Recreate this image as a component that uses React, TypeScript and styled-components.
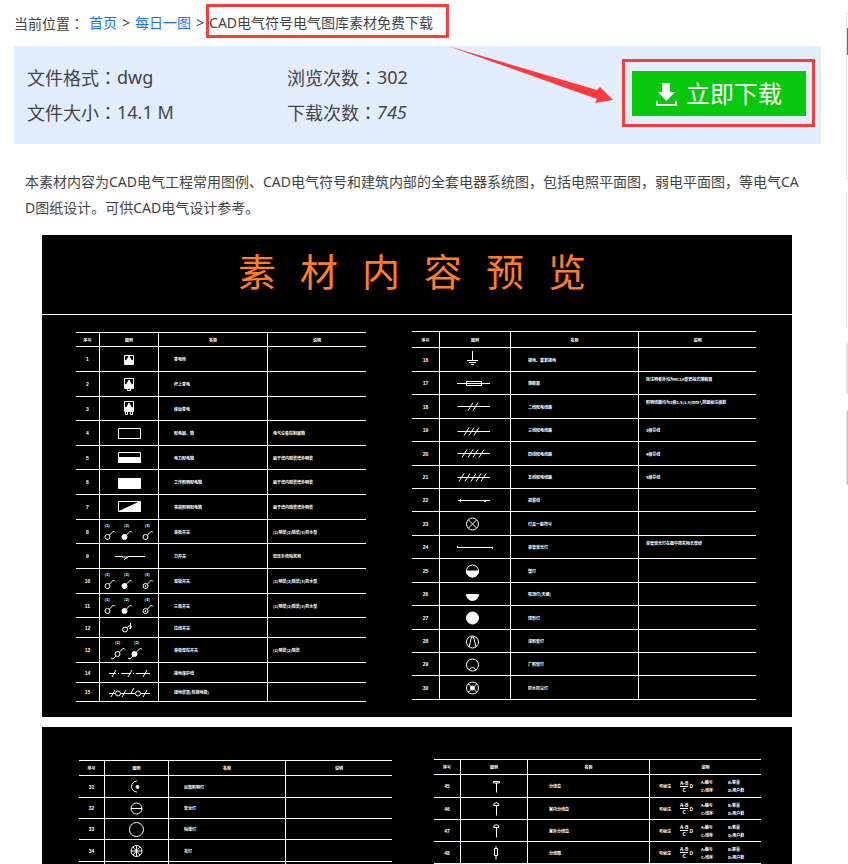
import React from "react";
import styled, { createGlobalStyle } from "styled-components";

const GlobalStyle = createGlobalStyle`
  * { box-sizing: border-box; }
  html, body { margin: 0; background: #fff; }
  body {
    font-family: "Noto Sans", "Noto Sans CJK SC", sans-serif;
    font-size: 14px;
    color: #444;
  }
`;

const RED = "#fd3b3b";

const Page = styled.div`
  display: flex;
  height: 100vh;
  overflow: hidden;
`;

const Main = styled.main`
  flex: 1;
  min-width: 0;
  margin: 0 25px 0 14px;
`;

const Crumbs = styled.nav`
  display: flex;
  align-items: center;
  gap: 5px;
  height: 46px;
  line-height: 20px;
`;

const Crumb = styled.a`
  color: #1e6fff;
  text-decoration: none;
`;

const Current = styled.span`
  position: relative;
`;

const Colon = styled.span`
  font-family: "Noto Sans CJK TC", sans-serif;
`;

const Frame = styled.i<{ $inset: string }>`
  position: absolute;
  inset: ${(p) => p.$inset};
  border: 3px solid ${RED};
  pointer-events: none;
`;

const InfoPanel = styled.section`
  position: relative;
  display: flex;
  align-items: center;
  padding: 14px 15px 14px 13px;
  background: #e2edff;
`;

const Facts = styled.dl`
  display: grid;
  grid-template-columns: 260px 1fr;
  grid-auto-rows: 35px;
  flex: 1;
  margin: 0;
  font-size: 18px;
  line-height: 34px;
`;

const Fact = styled.div`
  display: flex;
  dt, dd { margin: 0; }
`;

const Download = styled.button`
  position: relative;
  display: flex;
  align-items: center;
  justify-content: center;
  gap: 9px;
  width: 174px;
  height: 45px;
  margin-bottom: 3px;
  padding: 0;
  border: 0;
  background: #07c80a;
  color: #fff;
  font: inherit;
  font-size: 24px;
  line-height: 32px;
`;

const Arrow = styled.svg`
  position: absolute;
  top: 0;
  right: 207px;
`;

const Summary = styled.p`
  margin: 25px 15px 14px 11px;
  line-height: 26px;
  word-break: break-all;
`;

const Sheet = styled.section<{ $height: number }>`
  min-height: ${(p) => p.$height}px;
  margin: 0 29px 10px 28px;
  background: #000;
  color: #fff;
`;

const SheetTitle = styled.h2`
  display: flex;
  justify-content: center;
  gap: 24px;
  height: 80px;
  margin: 0;
  padding: 0 10px 6px 0;
  border-bottom: 1px solid #fff;
  color: #ff7f27;
  font-size: 38px;
  font-weight: 400;
  line-height: 72px;
`;

const Tables = styled.div<{ $pad: string; $gap: number }>`
  display: flex;
  align-items: flex-start;
  gap: ${(p) => p.$gap}px;
  padding: ${(p) => p.$pad};
`;

const Legend = styled.table<{ $grow: number; $top: number }>`
  flex: ${(p) => p.$grow} 1 0;
  width: 0;
  margin-top: ${(p) => p.$top}px;
  table-layout: fixed;
  border-spacing: 0;
  font-family: "Noto Sans CJK SC", sans-serif;
  font-size: 4px;
  font-weight: 700;
  line-height: 6px;
`;

const Col = styled.col<{ $w?: number }>`
  width: ${(p) => (p.$w ? `${p.$w}px` : "auto")};
`;

const Row = styled.tr<{ $h: number }>`
  height: ${(p) => p.$h}px;
`;

const Head = styled.th`
  padding: 0;
  border-top: 1px solid #fff;
  border-bottom: 1px solid #fff;
  text-align: center;
  & + & { border-left: 1px solid #fff; }
`;

const Cell = styled.td<{ $indent?: number; $top?: boolean }>`
  padding: ${(p) => (p.$top ? 4 : 0)}px 0 0 ${(p) => p.$indent || 0}px;
  border-bottom: 1px solid #fff;
  text-align: ${(p) => (p.$indent ? "left" : "center")};
  vertical-align: ${(p) => (p.$top ? "top" : "middle")};
  white-space: nowrap;
  & + & { border-left: 1px solid #fff; }
`;

const NumCell = styled(Cell)`
  font-family: "Liberation Sans", sans-serif;
  font-size: 5px;
`;

const Drawing = styled.svg`
  display: block;
  fill: none;
  stroke: #fff;
  text { fill: #fff; stroke: none; font-size: 4px; }
`;

const Marking = styled.div`
  display: grid;
  grid-template-columns: 21px 21px 27px 1fr;
  align-items: center;
  line-height: 8px;
`;

const Fraction = styled.span`
  display: flex;
  align-items: center;
  gap: 1px;
  font-size: 5px;
`;

const Ratio = styled.span`
  display: grid;
  line-height: 6px;
  text-align: center;
  span:first-child { border-bottom: 1px solid #fff; }
`;

const Lines = styled.span`
  display: grid;
`;

const Aside = styled.aside`
  flex: none;
  width: 2px;
  padding-top: 13px;
`;

const SideCard = styled.div<{ $h: number; $gap: number; $bg: string }>`
  height: ${(p) => p.$h}px;
  margin-bottom: ${(p) => p.$gap}px;
  padding-top: 14px;
  border: 1px solid #e3e5e8;
  border-right: 0;
  background: ${(p) => p.$bg};
`;

const SideTab = styled.div`
  height: 27px;
  background: #2a6fe8;
`;

type Entry = { no: string; h: number; art: React.ReactNode; name: string; note?: React.ReactNode; top?: boolean };

const Switch = ({ x, y = 17, solid, dot }: { x: number; y?: number; solid?: boolean; dot?: boolean }) => (
  <g>
    <circle cx={x} cy={y} r="2.5" fill={solid ? "#fff" : "none"} />
    <path d={`M${x + 2} ${y - 2}l4 -4l1.5 1.5`} />
    {dot && <circle cx={x} cy={y} r=".5" />}
  </g>
);

const Switches = ({ dot }: { dot?: boolean }) => (
  <g>
    <text x="4.5" y="6.5">(1)</text>
    <text x="24" y="6.5">(2)</text>
    <text x="44.5" y="6.5">(3)</text>
    <Switch x={7.5} />
    <Switch x={24.5} solid />
    <Switch x={45.5} dot={dot} />
  </g>
);

const Wire = ({ y, xs }: { y: number; xs: number[] }) => (
  <g>
    <path d={`M17.5 ${y}.5H50`} />
    {xs.map((x) => <path key={x} d={`M${x} ${y + 4}.5l5 -8`} />)}
  </g>
);

const Lamp = ({ y, children }: { y: number; children?: React.ReactNode }) => (
  <g transform={`translate(32.5 ${y})`}>
    <circle r="6" />
    {children}
  </g>
);

const fixNote = "画于墙内暗装墙外明装";
const modes = "(1)明装(2)暗装(3)防水型";

const listA: Entry[] = [
  { no: "1", h: 25, name: "变电所", art: <g><path d="M24.5 8.5h9v9h-9z" /><path d="M25 17v-3l2-1 2-4 2 4 2 1v3z" fill="#fff" /></g> },
  { no: "2", h: 25, name: "杆上变电", art: <g><path d="M24.5 6.5h9v10h-9z" /><path d="M25 16v-3l2-1 2-4 2 4 2 1v3z" fill="#fff" /><path d="M27.5 17v1.5h3V17" /></g> },
  { no: "3", h: 24, name: "移动变电", art: <g><path d="M24.5 4.5h9v10h-9z" /><path d="M25 14v-3l2-1 2-4 2 4 2 1v3z" fill="#fff" /><path d="M25.5 15v2.5h2V15M30.5 15v2.5h2V15" /></g> },
  { no: "4", h: 25, name: "配电屏、箱", note: "电气设备控制屏箱", art: <path d="M18.5 7.5h22v10h-22z" /> },
  { no: "5", h: 24, name: "电力配电箱", note: fixNote, art: <g><path d="M18.5 6.5h22v10h-22z" /><path d="M18.5 11.5h22v5h-22z" fill="#fff" /></g> },
  { no: "6", h: 25, name: "工作照明配电箱", note: fixNote, art: <path d="M18.5 8.5h22v10h-22z" fill="#fff" /> },
  { no: "7", h: 25, name: "事故照明配电箱", note: fixNote, art: <g><path d="M18.5 6.5h22v10h-22z" /><path d="M19 16.5l21.500-10v10z" fill="#fff" /></g> },
  { no: "8", h: 24, name: "单极开关", note: modes, art: <Switches /> },
  { no: "9", h: 25, name: "刀开关", note: "低压系统隔离用", art: <path d="M15 12.5h8M24 15.5l4-2.500h-6M28 12.5h17" /> },
  { no: "10", h: 25, name: "双极开关", note: modes, art: <Switches dot /> },
  { no: "11", h: 24, name: "三极开关", note: modes, art: <Switches dot /> },
  { no: "12", h: 20, name: "拉线开关", art: <g><circle cx="25" cy="11.5" r="2.500" /><path d="M27 9.500l4-3M30.500 5v6M29 10.500l3-2" /></g> },
  { no: "13", h: 25, name: "单极双控开关", note: "(1)明装(2)暗装", art: <g><text x="15" y="6">(1)</text><text x="34" y="6">(2)</text><Switch x={17.5} y={16} /><Switch x={34.5} y={16} solid /><path d="M16 18l-3 3-2-1M33 18l-3 3-2-1" /></g> },
  { no: "14", h: 20, name: "接地保护线", art: <path d="M9 10.5h7M18 10.500h1M21 10.500h10M33 10.500h1M36 10.500h14M12 14l4-7M28 14l4-7M43 14l4-7" /> },
  { no: "15", h: 19, name: "接地装置(有接地极)", art: <g><path d="M9 10.5h6M21 10.500h14M41 10.500h9M11 14l4-7M22 14l4-7M31 10l3-5M43 14l4-7" /><circle cx="18" cy="10.500" r="2.500" /><circle cx="38" cy="10.500" r="2.500" /></g> },
];

const listB: Entry[] = [
  { no: "16", h: 24, name: "接地、重复接地", art: <path d="M32.5 3v9M27 12.5h11M29 14.500h7M31 16.500h3" /> },
  { no: "17", h: 23, name: "熔断器", top: true, note: "除注明者外均为RC1A型瓷插式熔断器", art: <path d="M17 11.5h33M26.500 9.500h15v4h-15z" /> },
  { no: "18", h: 24, name: "二线配电线路", top: true, note: "照明线路均为2根2.5(1.5)mm²,按图标注根数", art: <Wire y={11} xs={[28, 33]} /> },
  { no: "19", h: 23, name: "三线配电线路", note: "3根导线", art: <Wire y={12} xs={[24, 29, 34]} /> },
  { no: "20", h: 24, name: "四线配电线路", note: "4根导线", art: <Wire y={11} xs={[22, 28, 33, 39]} /> },
  { no: "21", h: 23, name: "五线配电线路", note: "5根导线", art: <Wire y={11} xs={[19, 25, 31, 36, 41]} /> },
  { no: "22", h: 23, name: "避雷线", art: <path d="M18 11.500h32M20.500 10v3M44 12.500h2" /> },
  { no: "23", h: 24, name: "灯具一般符号", art: <Lamp y={12}><path d="M-4-4l8 8M4-4l-8 8" /></Lamp> },
  { no: "24", h: 23, name: "单管荧光灯", top: true, note: "单管荧光灯在图中按实际长度绘", art: <path d="M17.500 10v1.500h35v1.500" /> },
  { no: "25", h: 24, name: "壁灯", art: <Lamp y={12}><path d="M-6 0a6 6 0 0 0 12 0z" fill="#fff" /></Lamp> },
  { no: "26", h: 23, name: "吸顶灯(天棚)", art: <path d="M26.500 11.500a6 6 0 0 0 12 0z" fill="#fff" /> },
  { no: "27", h: 24, name: "球形灯", art: <circle cx="32.500" cy="12" r="6" fill="#fff" /> },
  { no: "28", h: 23, name: "深照型灯", art: <Lamp y={12}><path d="M-3.500 5l2.500-10h2l2.500 10" /></Lamp> },
  { no: "29", h: 23, name: "广照型灯", art: <Lamp y={12}><path d="M-3.500 5q3.500-5 7 0" /></Lamp> },
  { no: "30", h: 24, name: "防水防尘灯", art: <Lamp y={12}><path d="M-4-4l8 8M4-4l-8 8" /><circle r="2" fill="#fff" /></Lamp> },
];

const listC: Entry[] = [
  { no: "31", h: 22, name: "局部照明灯", art: <g><path d="M32 5a5.500 5.500 0 0 0 0 11" /><circle cx="32.500" cy="11" r="1.500" fill="#fff" /></g> },
  { no: "32", h: 21, name: "安全灯", art: <g><circle cx="31.500" cy="10.500" r="5.500" /><path d="M26 10.500h11" /></g> },
  { no: "33", h: 21, name: "隔爆灯", art: <circle cx="31.500" cy="10.500" r="7" /> },
  { no: "34", h: 22, name: "花灯", art: <g><circle cx="31.500" cy="11" r="5.500" /><path d="M31.500 5.500v11M26 11h11M28 7l7 8M35 7l-7 8" /></g> },
  { no: "", h: 22, name: "", art: null },
];

const marking = (
  <Marking>
    <span>可标注</span>
    <Fraction><Ratio><span>A-B</span><span>C</span></Ratio>D</Fraction>
    <Lines><span>A:编号</span><span>C:线序</span></Lines>
    <Lines><span>B:容量</span><span>D:用户数</span></Lines>
  </Marking>
);

const cap = "M32.500 7.500a2.500 2.500 0 0 1 5.500 0zM35.500 7.500v10";

const listD: Entry[] = [
  { no: "45", h: 23, name: "分线盒", note: marking, art: <path d="M32.500 6.500h6v1.500h-6zM35.500 7.500v10" /> },
  { no: "46", h: 22, name: "室内分线盒", note: marking, art: <path d={cap} /> },
  { no: "47", h: 22, name: "室外分线盒", note: marking, art: <path d={cap} /> },
  { no: "48", h: 22, name: "分线箱", note: marking, art: <path d="M33.500 6.500h3v7h-3zM35 4v2M35 13.500v4" /> },
  { no: "", h: 22, name: "", art: null },
];

type LegendProps = { list: Entry[]; cols: number[]; head: number; grow: number; top?: number; indent: number; noteIndent: number };

function LegendTable({ list, cols, head, grow, top = 0, indent, noteIndent }: LegendProps) {
  return (
    <Legend $grow={grow} $top={top}>
      <colgroup>
        {cols.map((w, i) => <Col key={i} $w={w} />)}
        <Col />
      </colgroup>
      <thead>
        <Row $h={head}>
          <Head>序号</Head><Head>图例</Head><Head>名称</Head><Head>说明</Head>
        </Row>
      </thead>
      <tbody>
        {list.map((e, i) => (
          <Row key={i} $h={e.h}>
            <NumCell>{e.no}</NumCell>
            <Cell>
              <Drawing width={cols[1] - 1} height={e.h - 1} viewBox={`0 0 ${cols[1] - 1} ${e.h - 1}`} aria-hidden="true">{e.art}</Drawing>
            </Cell>
            <Cell $indent={indent}>{e.name}</Cell>
            <Cell $indent={noteIndent} $top={e.top}>{e.note}</Cell>
          </Row>
        ))}
      </tbody>
    </Legend>
  );
}

function LabelledFact({ label, children }: { label: string; children: React.ReactNode }) {
  return (
    <Fact>
      <dt>{label}<Colon>：</Colon></dt>
      <dd>{children}</dd>
    </Fact>
  );
}

export default function App() {
  return (
    <Page>
      <GlobalStyle />
      <Main>
        <Crumbs aria-label="当前位置">
          <span>当前位置<Colon>：</Colon></span>
          <Crumb href="#home">首页</Crumb>
          <span>&gt;</span>
          <Crumb href="#daily">每日一图</Crumb>
          <span>&gt;</span>
          <Current>CAD电气符号电气图库素材免费下载<Frame $inset="-9px -16px -5px -3px" /></Current>
        </Crumbs>

        <InfoPanel>
          <Facts>
            <LabelledFact label="文件格式">dwg</LabelledFact>
            <LabelledFact label="浏览次数">302</LabelledFact>
            <LabelledFact label="文件大小">14.1 M</LabelledFact>
            <LabelledFact label="下载次数"><em>745</em></LabelledFact>
          </Facts>
          <Download type="button">
            <svg width="21" height="24" viewBox="0 0 21 24" fill="#fff" aria-hidden="true">
              <path d="M6 1h8v9h5l-8.500 9L2 10h4z" />
              <path d="M0 19h2v3h17v-3h2v5H0z" />
            </svg>
            立即下载
            <Frame $inset="-12px -9px -11px -10px" />
          </Download>
          <Arrow width="166" height="58" viewBox="0 0 166 58" aria-hidden="true">
            <path d="M0 0L149 44l3-3 13 13-18 3 2-4z" fill={RED} />
          </Arrow>
        </InfoPanel>

        <Summary>
          本素材内容为CAD电气工程常用图例、CAD电气符号和建筑内部的全套电器系统图，包括电照平面图，弱电平面图，等电气CAD图纸设计。可供CAD电气设计参考。
        </Summary>

        <Sheet $height={482}>
          <SheetTitle>
            {["素", "材", "内", "容", "预", "览"].map((c) => <span key={c}>{c}</span>)}
          </SheetTitle>
          <Tables $pad="16px 36px 0 34px" $gap={46}>
            <LegendTable list={listA} cols={[23, 59, 109]} head={15} grow={290} top={1} indent={15} noteIndent={5} />
            <LegendTable list={listB} cols={[27, 71, 128]} head={17} grow={344} indent={17} noteIndent={7} />
          </Tables>
        </Sheet>

        <Sheet $height={482}>
          <Tables $pad="32px 31px 0 37px" $gap={42}>
            <LegendTable list={listC} cols={[25, 64, 117]} head={16} grow={313} top={1} indent={15} noteIndent={5} />
            <LegendTable list={listD} cols={[26, 67, 122]} head={16} grow={327} indent={21} noteIndent={9} />
          </Tables>
        </Sheet>
      </Main>
      <Aside>
        <SideCard $h={166} $gap={14} $bg="#fff"><SideTab /></SideCard>
        <SideCard $h={135} $gap={15} $bg="#fff" />
        <SideCard $h={51} $gap={16} $bg="#c9e9f6" />
        <SideCard $h={75} $gap={0} $bg="#f5c21b" />
      </Aside>
    </Page>
  );
}
